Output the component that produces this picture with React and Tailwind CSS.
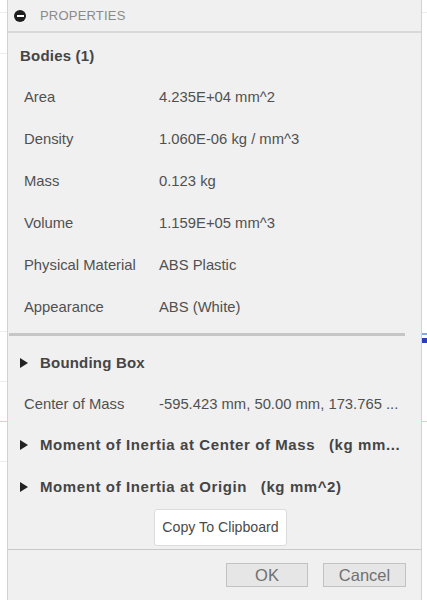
import React from "react";

const font = { fontFamily: '"Liberation Sans", Arial, sans-serif' };

function Row({ label, value, h }) {
  return (
    <div className={"flex items-center pl-4 text-[14.8px] text-[#505050] " + (h || "h-[42px]")}>
      <div className="w-[135px] shrink-0 whitespace-nowrap">{label}</div>
      <div className="whitespace-nowrap">{value}</div>
    </div>
  );
}

function Tri() {
  return (
    <svg width="8" height="10" viewBox="0 0 8 10" className="shrink-0">
      <polygon points="0,0 8,5 0,10" fill="#222" />
    </svg>
  );
}

function Section({ children, wide }) {
  return (
    <div
      className={
        "flex h-[42px] items-center pl-3 text-[15px] font-bold text-[#454545] whitespace-nowrap " +
        (wide ? "tracking-[0.6px]" : "tracking-[0.2px]")
      }
    >
      <Tri />
      <div className="ml-[12px]">{children}</div>
    </div>
  );
}

export default function App() {
  return (
    <div className="flex h-[600px] w-[427px] overflow-hidden bg-white" style={font}>
      <div className="w-[7px] shrink-0 flex flex-col">
        <div className="mt-[12px] h-px bg-[#ececec]" />
        <div className="mt-[40px] h-px bg-[#ececec]" />
        <div className="mt-[277px] h-px bg-[#ececec]" />
        <div className="mt-[49px] h-px bg-[#ececec]" />
        <div className="mt-[39px] h-px bg-[#f2c4c4]" />
        <div className="mt-[39px] h-px bg-[#ececec]" />
      </div>
      <div className="flex w-[415px] shrink-0 flex-col border-x border-[#d2d2d2] bg-[#f0f0f0]">
        <div className="flex h-[33px] shrink-0 items-center border-b-2 border-[#d8d8d8] bg-[#f0f0f0] pt-[1px]">
          <div className="ml-[6px] flex h-[12px] w-[12px] items-center justify-center rounded-full bg-[#1e1e1e]">
            <div className="h-[2px] w-[7px] bg-white" />
          </div>
          <div className="ml-[14px] text-[13px] tracking-[0.2px] text-[#8a8a8a]">PROPERTIES</div>
        </div>
        <div className="flex h-[43px] items-center pl-3 pt-[3px] text-[15px] font-bold tracking-[0.2px] text-[#454545]">
          Bodies (1)
        </div>
        <Row label="Area" value="4.235E+04 mm^2" />
        <Row label="Density" value="1.060E-06 kg / mm^3" />
        <Row label="Mass" value="0.123 kg" />
        <Row label="Volume" value="1.159E+05 mm^3" />
        <Row label="Physical Material" value="ABS Plastic" />
        <Row label="Appearance" value="ABS (White)" />
        <div className="mt-[5px] ml-[1px] h-[3px] w-[396px] bg-[#c6c6c6]" />
        <div className="h-[6px]" />
        <Section>Bounding Box</Section>
        <Row label="Center of Mass" value="-595.423 mm, 50.00 mm, 173.765 ..." h="h-[40px]" />
        <Section wide>
          Moment of Inertia at Center of Mass <span className="ml-[9px]">(kg mm...</span>
        </Section>
        <Section wide>
          Moment of Inertia at Origin <span className="ml-[9px]">(kg mm^2)</span>
        </Section>
        <div className="mt-[1px] ml-[146px] flex h-[37px] w-[133px] items-center justify-center rounded-[3px] border border-[#dcdcdc] bg-white text-[14.2px] text-[#4a4a4a]">
          Copy To Clipboard
        </div>
        <div className="mt-[3px] h-px bg-[#c8c8c8]" />
        <div className="flex justify-end gap-[15px] pr-[15px] pt-[13px]">
          <div className="flex h-[24px] w-[82px] items-center justify-center border border-[#c2c2c2] bg-[#e6e6e6] text-[16.5px] text-[#707070]">
            OK
          </div>
          <div className="flex h-[24px] w-[83px] items-center justify-center border border-[#c2c2c2] bg-[#e6e6e6] text-[16.5px] text-[#707070]">
            Cancel
          </div>
        </div>
      </div>
      <div className="w-[5px] shrink-0 flex flex-col">
        <div className="mt-[12px] h-px bg-[#ececec]" />
        <div className="mt-[320px] h-[2px] bg-[#7fa8f0]" />
        <div className="mt-[3px] h-[5px] bg-[#2a3fc0]" />
        <div className="mt-[78px] h-px bg-[#f2c4c4]" />
      </div>
    </div>
  );
}
